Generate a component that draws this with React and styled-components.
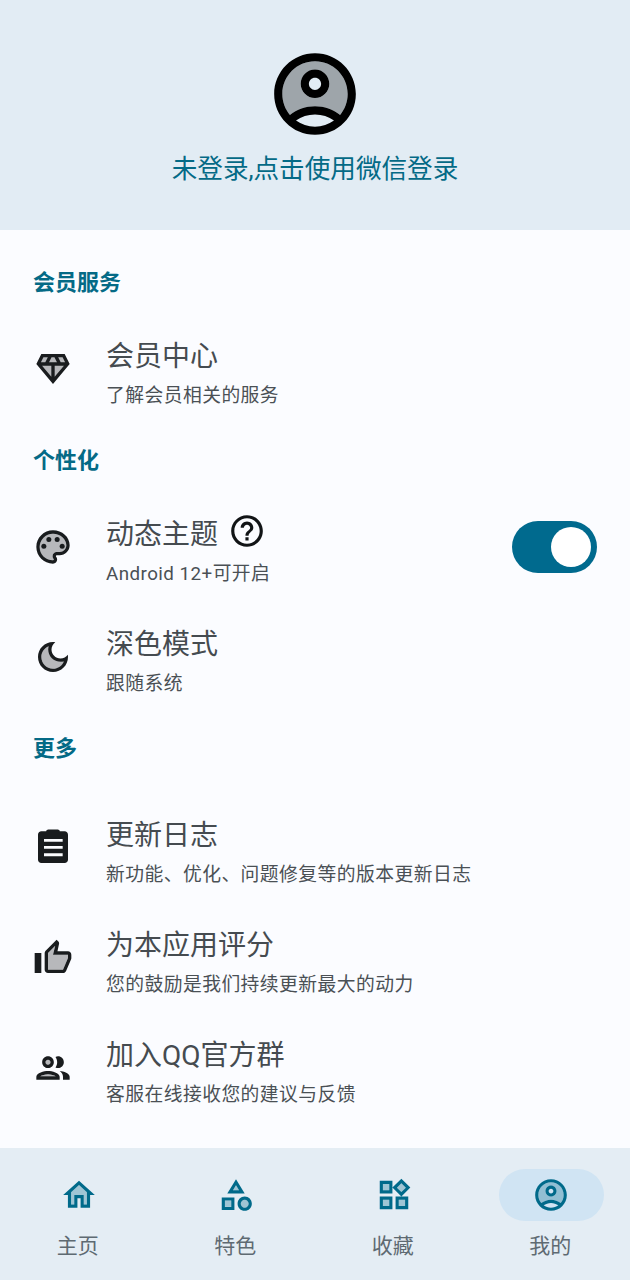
import React from 'react';
import styled, { createGlobalStyle } from 'styled-components';

const GlobalStyle = createGlobalStyle`
  html, body {
    margin: 0;
    padding: 0;
    background: #fbfcff;
    font-family: Roboto, "Noto Sans CJK SC", sans-serif;
  }
`;

const Page = styled.div`
  display: flex;
  flex-direction: column;
  width: 630px;
  height: 1280px;
  overflow: hidden;
  background: #fbfcff;
`;

const Header = styled.header`
  display: flex;
  flex-direction: column;
  align-items: center;
  flex: none;
  height: 230px;
  padding-top: 45px;
  box-sizing: border-box;
  background: #e2ecf4;
`;

const LoginText = styled.div`
  margin-top: 7px;
  font-size: 25.6px;
  line-height: 38px;
  color: #046a86;
`;

const Body = styled.main`
  flex: 1;
  padding-top: 22px;
`;

const SectionLabel = styled.div`
  margin: 12px 0 ${p => p.$after}px 33px;
  font-size: 22px;
  line-height: 38px;
  font-weight: 700;
  color: #046a86;
`;

const Row = styled.div`
  display: flex;
  align-items: flex-start;
  height: 110px;
  padding: 0 33px;
`;

const RowIcon = styled.div`
  flex: none;
  width: 40px;
  height: 40px;
  margin: 29px 33px 0 0;
  color: #191c1e;
`;

const RowText = styled.div`
  flex: 1;
  padding-top: 17px;
`;

const TitleLine = styled.div`
  display: flex;
  align-items: center;
  gap: 10px;
  height: 40px;
`;

const Title = styled.div`
  font-size: 28px;
  line-height: 40px;
  color: #454b50;
`;

const HelpIcon = styled.div`
  width: 38px;
  height: 38px;
  margin-top: -9px;
  color: #111416;
`;

const Sub = styled.div`
  margin-top: 5px;
  font-size: 18.8px;
  letter-spacing: 0.45px;
  line-height: 28px;
  color: #4a5055;
`;

const Toggle = styled.div`
  flex: none;
  display: flex;
  justify-content: flex-end;
  align-items: center;
  width: 85px;
  height: 52px;
  margin-top: 23px;
  padding-right: 6px;
  box-sizing: border-box;
  border-radius: 26px;
  background: #006a8e;
`;

const Thumb = styled.div`
  width: 40px;
  height: 40px;
  border-radius: 50%;
  background: #ffffff;
`;

const Nav = styled.nav`
  flex: none;
  display: grid;
  grid-template-columns: repeat(4, 1fr);
  height: 132px;
  background: #e4edf4;
`;

const Tab = styled.div`
  display: flex;
  flex-direction: column;
  align-items: center;
  padding-top: 21px;
`;

const TabIcon = styled.div`
  display: flex;
  justify-content: center;
  align-items: center;
  width: 105px;
  height: 52px;
  border-radius: 26px;
  color: #006a8a;
  background: ${p => (p.$active ? '#d0e4f3' : 'transparent')};
`;

const TabLabel = styled.div`
  margin: 10px 2px 0 0;
  font-size: 21px;
  line-height: 30px;
  color: #5e6a72;
`;

const Svg = ({ size, children }) => (
  <svg width={size} height={size} viewBox="0 0 24 24" fill="currentColor" style={{ display: 'block' }}>
    {children}
  </svg>
);

const Soft = props => <path opacity="0.3" {...props} />;

const AccountIcon = ({ size }) => (
  <Svg size={size}>
    <Soft d="M12 4c-4.42 0-8 3.58-8 8 0 1.95.7 3.73 1.86 5.12C7.55 15.8 9.68 15 12 15s4.45.8 6.14 2.12C19.3 15.73 20 13.95 20 12c0-4.42-3.58-8-8-8zm0 9c-1.93 0-3.5-1.57-3.5-3.5S10.07 6 12 6s3.5 1.57 3.5 3.5S13.93 13 12 13z" />
    <path d="M12 2C6.48 2 2 6.48 2 12s4.48 10 10 10 10-4.48 10-10S17.52 2 12 2zM7.35 18.5C8.66 17.56 10.26 17 12 17s3.34.56 4.65 1.5C15.34 19.44 13.74 20 12 20s-3.34-.56-4.65-1.5zm10.79-1.38C16.45 15.8 14.32 15 12 15s-4.45.8-6.14 2.12C4.7 15.73 4 13.95 4 12c0-4.42 3.58-8 8-8s8 3.58 8 8c0 1.95-.7 3.73-1.86 5.12z" />
    <path d="M12 6c-1.93 0-3.5 1.57-3.5 3.5S10.07 13 12 13s3.5-1.57 3.5-3.5S13.93 6 12 6zm0 5c-.83 0-1.5-.67-1.5-1.5S11.17 8 12 8s1.5.67 1.5 1.5S12.83 11 12 11z" />
  </Svg>
);

const DiamondIcon = () => (
  <Svg size={40}>
    <Soft d="M5 4 3 9l9 11 9-11-2-5z" />
    <path d="M19 3H5L2 9l10 12L22 9l-3-6zM9.62 8l1.5-3h1.76l1.5 3H9.62zM11 10v6.68L5.44 10H11zm2 0h5.56L13 16.68V10zm6.26-2h-2.65l-1.5-3h2.65l1.5 3zM6.24 5h2.65l-1.5 3H4.74l1.5-3z" />
  </Svg>
);

const PaletteIcon = () => (
  <Svg size={40}>
    <Soft d="M12 4c-4.41 0-8 3.59-8 8s3.59 8 8 8c.28 0 .5-.22.5-.5 0-.16-.08-.28-.14-.35-.41-.46-.63-1.05-.63-1.65 0-1.38 1.12-2.5 2.5-2.5H16c2.21 0 4-1.79 4-4 0-3.86-3.59-7-8-7z" />
    <path d="M12 2C6.49 2 2 6.49 2 12s4.49 10 10 10c1.38 0 2.5-1.12 2.5-2.5 0-.61-.23-1.2-.64-1.67-.08-.1-.13-.21-.13-.33 0-.28.22-.5.5-.5H16c3.31 0 6-2.69 6-6 0-4.96-4.49-9-10-9zm4 13h-1.77c-1.38 0-2.5 1.12-2.5 2.5 0 .61.22 1.19.63 1.65.06.07.14.19.14.35 0 .28-.22.5-.5.5-4.41 0-8-3.59-8-8s3.59-8 8-8 8 3.14 8 7c0 2.21-1.79 4-4 4z" />
    <circle cx="6.5" cy="11.5" r="1.5" />
    <circle cx="9.5" cy="7.5" r="1.5" />
    <circle cx="14.5" cy="7.5" r="1.5" />
    <circle cx="17.5" cy="11.5" r="1.5" />
  </Svg>
);

const MoonIcon = () => (
  <Svg size={40}>
    <Soft d="M9.37 5.51c-.18.64-.27 1.31-.27 1.99 0 4.08 3.32 7.4 7.4 7.4.68 0 1.35-.09 1.99-.27C17.45 17.19 14.93 19 12 19c-3.86 0-7-3.14-7-7 0-2.93 1.81-5.45 4.37-6.49z" />
    <path d="M9.37 5.51C9.19 6.15 9.1 6.82 9.1 7.5c0 4.08 3.32 7.4 7.4 7.4.68 0 1.35-.09 1.99-.27C17.45 17.19 14.93 19 12 19c-3.86 0-7-3.14-7-7 0-2.93 1.81-5.45 4.37-6.49zM12 3c-4.97 0-9 4.03-9 9s4.03 9 9 9 9-4.03 9-9c0-.46-.04-.92-.1-1.36-.98 1.37-2.58 2.26-4.4 2.26-2.98 0-5.4-2.42-5.4-5.4 0-1.81.89-3.42 2.26-4.4-.44-.06-.9-.1-1.36-.1z" />
  </Svg>
);

// board with a low flat clip on top and three full-width lines cut out
const ClipboardIcon = () => (
  <Svg size={40}>
    <path
      fillRule="evenodd"
      d="M9.2.9h5.6c.7 0 1.2.5 1.3 1.1h2.9c1.1 0 2 .9 2 2v15c0 1.1-.9 2-2 2H5c-1.1 0-2-.9-2-2V4c0-1.1.9-2 2-2h2.9c.1-.6.6-1.1 1.3-1.1zM6.6 6.6h11.2v1.7H6.6zm0 4.2h11.2v1.7H6.6zm0 4.4h11.2v1.7H6.6z"
    />
  </Svg>
);

const ThumbIcon = () => (
  <Svg size={40}>
    <Soft d="M21 12v-2h-9l1.34-5.34L9 9v10h9z" />
    <path d="M9 21h9c.83 0 1.54-.5 1.84-1.22l3.02-7.05c.09-.23.14-.47.14-.73v-2c0-1.1-.9-2-2-2h-6.31l.95-4.57.03-.32c0-.41-.17-.79-.44-1.06L14.17 1 7.58 7.59C7.22 7.95 7 8.45 7 9v10c0 1.1.9 2 2 2zM9 9l4.34-4.34L12 10h9v2l-3 7H9V9zM1 9h4v12H1z" />
  </Svg>
);

const PeopleIcon = () => (
  <Svg size={40}>
    <circle cx="9" cy="8.5" r="1.5" opacity="0.3" />
    <Soft d="M9 15.75c-1.79 0-3.82.67-4.66 1.25h9.32c-.84-.58-2.87-1.25-4.66-1.25z" />
    <path d="M9 13.75c-2.34 0-7 1.17-7 3.5V19h14v-1.75c0-2.33-4.66-3.5-7-3.5zM4.34 17c.84-.58 2.87-1.25 4.66-1.25s3.82.67 4.66 1.25H4.34zM9 12c1.93 0 3.5-1.57 3.5-3.5S10.93 5 9 5 5.5 6.57 5.5 8.5 7.07 12 9 12zm0-5c.83 0 1.5.67 1.5 1.5S9.83 10 9 10s-1.5-.67-1.5-1.5S8.17 7 9 7zm7.04 6.81c1.16.84 1.96 1.96 1.96 3.44V19h4v-1.75c0-2.02-3.5-3.17-5.96-3.44zM15 12c1.93 0 3.5-1.57 3.5-3.5S16.93 5 15 5c-.54 0-1.04.13-1.5.35.63.89 1 1.98 1 3.15s-.37 2.26-1 3.15c.46.22.96.35 1.5.35z" />
  </Svg>
);

const QuestionIcon = () => (
  <Svg size={38}>
    <path d="M11 18h2v-2h-2v2zm1-16C6.48 2 2 6.48 2 12s4.48 10 10 10 10-4.48 10-10S17.52 2 12 2zm0 18c-4.41 0-8-3.59-8-8s3.59-8 8-8 8 3.59 8 8-3.59 8-8 8zm0-14c-2.21 0-4 1.79-4 4h2c0-1.1.9-2 2-2s2 .9 2 2c0 2-3 1.75-3 5h2c0-2.25 3-2.5 3-5 0-2.21-1.79-4-4-4z" />
  </Svg>
);

const HomeIcon = () => (
  <Svg size={38}>
    <Soft d="M7 10.19V18h2v-6h6v6h2v-7.81l-5-4.5z" />
    <path d="M12 3L2 12h3v8h6v-6h2v6h6v-8h3L12 3zm5 15h-2v-6H9v6H7v-7.81l5-4.5 5 4.5V18z" />
  </Svg>
);

const CategoryIcon = () => (
  <Svg size={38}>
    <Soft d="M12 5.84 10.06 9h3.87z" />
    <Soft d="M5 15.5h4v4H5z" />
    <circle cx="17.5" cy="17.5" r="2.5" opacity="0.3" />
    <path d="M12 2l-5.5 9h11L12 2zm0 3.84L13.93 9h-3.87L12 5.84zM17.5 13c-2.49 0-4.5 2.01-4.5 4.5s2.01 4.5 4.5 4.5 4.5-2.01 4.5-4.5-2.01-4.5-4.5-4.5zm0 7c-1.38 0-2.5-1.12-2.5-2.5s1.12-2.5 2.5-2.5 2.5 1.12 2.5 2.5-1.12 2.5-2.5 2.5zM3 21.5h8v-8H3v8zm2-6h4v4H5v-4z" />
  </Svg>
);

const WidgetsIcon = () => (
  <Svg size={38}>
    <Soft d="M5 5h4v4H5zM15 15h4v4h-4zM5 15h4v4H5zM16.66 4.52l2.83 2.83-2.83 2.83-2.83-2.83z" />
    <path d="M16.66 4.52l2.83 2.83-2.83 2.83-2.83-2.83 2.83-2.83M9 5v4H5V5h4m10 10v4h-4v-4h4M9 15v4H5v-4h4m7.66-13.31L11 7.34 16.66 13l5.66-5.66-5.66-5.65zM11 3H3v8h8V3zm10 10h-8v8h8v-8zm-10 0H3v8h8v-8z" />
  </Svg>
);

const sections = [
  {
    label: '会员服务',
    after: 18,
    items: [{ icon: <DiamondIcon />, title: '会员中心', sub: '了解会员相关的服务' }],
  },
  {
    label: '个性化',
    after: 18,
    items: [
      { icon: <PaletteIcon />, title: '动态主题', sub: 'Android 12+可开启', help: true, toggle: true },
      { icon: <MoonIcon />, title: '深色模式', sub: '跟随系统' },
    ],
  },
  {
    label: '更多',
    after: 31,
    items: [
      { icon: <ClipboardIcon />, title: '更新日志', sub: '新功能、优化、问题修复等的版本更新日志' },
      { icon: <ThumbIcon />, title: '为本应用评分', sub: '您的鼓励是我们持续更新最大的动力' },
      { icon: <PeopleIcon />, title: '加入QQ官方群', sub: '客服在线接收您的建议与反馈' },
    ],
  },
];

const tabs = [
  { icon: <HomeIcon />, label: '主页' },
  { icon: <CategoryIcon />, label: '特色' },
  { icon: <WidgetsIcon />, label: '收藏' },
  { icon: <AccountIcon size={38} />, label: '我的', active: true },
];

export default function App() {
  return (
    <Page>
      <GlobalStyle />
      <Header>
        <AccountIcon size={98} />
        <LoginText>未登录,点击使用微信登录</LoginText>
      </Header>
      <Body>
        {sections.map(section => (
          <section key={section.label}>
            <SectionLabel $after={section.after}>{section.label}</SectionLabel>
            {section.items.map(item => (
              <Row key={item.title}>
                <RowIcon>{item.icon}</RowIcon>
                <RowText>
                  <TitleLine>
                    <Title>{item.title}</Title>
                    {item.help && (
                      <HelpIcon>
                        <QuestionIcon />
                      </HelpIcon>
                    )}
                  </TitleLine>
                  <Sub>{item.sub}</Sub>
                </RowText>
                {item.toggle && (
                  <Toggle>
                    <Thumb />
                  </Toggle>
                )}
              </Row>
            ))}
          </section>
        ))}
      </Body>
      <Nav>
        {tabs.map(tab => (
          <Tab key={tab.label}>
            <TabIcon $active={tab.active}>{tab.icon}</TabIcon>
            <TabLabel>{tab.label}</TabLabel>
          </Tab>
        ))}
      </Nav>
    </Page>
  );
}
